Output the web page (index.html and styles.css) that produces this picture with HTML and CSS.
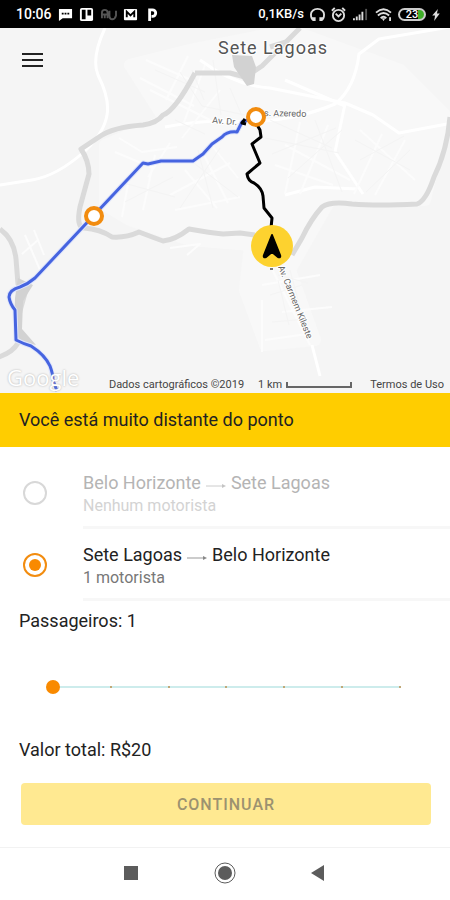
FILE: index.html
```html
<!DOCTYPE html>
<html lang="pt-BR">
<head>
    <meta charset="UTF-8">
    <meta name="viewport" content="width=device-width, initial-scale=1.0">
    <title>Sete Lagoas - Belo Horizonte</title>
    <link rel="stylesheet" href="styles.css">
</head>
<body>

<header class="status-bar">
    <div class="status-group">
        <span class="clock">10:06</span>
        <svg class="status-icon" viewBox="0 0 16 16">
            <path fill="#fff" d="M1 2h14v10H5l-4 3z"/>
            <path fill="#000" d="M4 6h2v2H4zM7 6h2v2H7zM10 6h2v2h-2z"/>
        </svg>
        <svg class="status-icon" viewBox="0 0 16 16">
            <rect x="1" y="1" width="14" height="14" rx="2" fill="#fff"/>
            <path fill="#000" d="M3 3h4v10H3zM9 3h4v6H9z"/>
        </svg>
        <svg class="status-icon wide" viewBox="0 0 18 16" fill="none" stroke="#555" stroke-width="2">
            <path d="M2 12V6q0-3 3-3t3 3v6M2 8h6M10 4v5q0 4 3 4t4-4V4M5 8v4"/>
        </svg>
        <svg class="status-icon" viewBox="0 0 16 16">
            <rect x="1" y="2" width="14" height="12" rx="1" fill="#fff"/>
            <path fill="none" stroke="#000" stroke-width="2" d="M4 11V5l4 4 4-4v6"/>
        </svg>
        <svg class="status-icon" viewBox="0 0 16 16">
            <path fill="none" stroke="#fff" stroke-width="3" d="M6 15V3h3a3 3 0 0 1 0 7H8"/>
        </svg>
    </div>
    <div class="status-group status-right">
        <span class="speed">0,1KB/s</span>
        <svg class="status-icon" viewBox="0 0 16 16">
            <path fill="none" stroke="#ddd" stroke-width="2" d="M4 14C1 13 1 10 1 8a7 6 0 0 1 14 0c0 2 0 5-3 6"/>
            <path fill="#ddd" d="M2 11h4v4H3zM10 11h4l-1 4h-3z"/>
        </svg>
        <svg class="status-icon" viewBox="0 0 16 16" fill="none" stroke="#ddd" stroke-width="2">
            <circle cx="8" cy="9" r="6"/>
            <path d="M1 4l3-3M15 4l-3-3M5 7l3 3 3-3"/>
        </svg>
        <svg class="status-icon wide" viewBox="0 0 18 16">
            <path fill="#ddd" d="M1 12h2v2H1zM4 10h2v4H4zM7 8h2v6H7zM10 5h2v9h-2z"/>
            <path fill="#555" d="M14 2h2v12h-2z"/>
        </svg>
        <svg class="status-icon wide" viewBox="0 0 18 16" fill="none" stroke="#ddd" stroke-width="2">
            <path d="M1 6q8-7 16 0M3 9q6-5 12 0M6 12q3-3 6 0"/>
            <path fill="#ddd" stroke="none" d="M7 12h4l-2 3zM15 11h2v4h-2z"/>
        </svg>
        <span class="battery">23</span>
        <svg class="status-icon bolt" viewBox="0 0 8 16">
            <path fill="#ddd" d="M6 2L0 9h3l-1 6 6-8H5z"/>
        </svg>
    </div>
</header>

<main class="map">
    <svg class="map-canvas" viewBox="0 28 450 365" preserveAspectRatio="xMidYMid slice">
        <rect y="28" width="450" height="365" fill="#f5f5f5"/>

        <!-- built-up area -->
        <path class="town" d="M130 65L190 50 290 30 400 70 445 115 425 200 330 200 290 270 315 340 265 345 245 290 250 245 190 240 130 220 105 205 105 145 165 120z"/>

        <!-- local streets -->
        <g class="streets">
            <path d="M105 28q-14 30-7 47 12 24 9 40-3 18-22 36-28 25-53 29L0 185"/>
            <path d="M165 127q30-6 60-6 60 4 110-17 20-16 24-50l20-15 71-12"/>
            <path d="M200 60q35 26 70 28l75 15 28 12 26 18 48-9"/>
            <path d="M285 80l60 26M345 104l-10 48 28 42M285 195l30-8 42 2"/>
            <path d="M312 345l8 31"/>
        </g>
        <g class="lanes">
            <path d="M270 265l40 80M282 312l50-5M262 285l58-10M265 340l42-6M262 300v52"/>
            <path d="M119 138l23 14 35-5M115 152l38 16M130 173l-8 44M155 155l-12 55M170 143l-22 34"/>
            <path d="M150 90l60 30M188 56l-22 44M205 65l-22 60M146 60l45 20M140 78l54 28M220 90l-38 48"/>
            <path d="M185 170l32 38M202 151l26 52M170 195l60-32M175 210l65-13M210 143l28 35"/>
            <path d="M285 145l65 35M275 165l58 20M300 122l-15 72M328 125l-28 69M360 130l55 50M382 134l-28 60M405 140l-30 55"/>
            <path d="M25 235l15 35M34 230l10 25M170 248l30-4-13 11M38 240l-16 14"/>
        </g>
        <g class="blocks">
            <path d="M180 72l22 34 43 9M192 70l12 30M213 60l8 55M230 88l12 28M155 70l50 22M175 120l30 14"/>
            <path d="M120 182l55 15M125 202l48-25M190 160l48 37M198 150l15 58M220 148l-40 60"/>
            <path d="M270 120l62 28M265 138l74 15M272 154l64-26M288 178l54-48M315 120l27 72M355 140l55 30M360 160l44-24M410 150l-44 42"/>
            <path d="M278 275l30 8M270 295l32-10M272 322l35-3M290 270l12 45M278 280l11 45"/>
        </g>

        <!-- highways -->
        <g class="highways">
            <path d="M450 117q-3 34-16 60-8 24-17 27-40 2-65 0-22-3-30 3-11 12-20 31l-10 17"/>
            <path d="M195 73q-20 38-32 42-6 8-20 10-30 2-44 12l-18 12q8 12 8 25l-9 33q-4 20 4 21 16 1 28 9 14 1 27-5 13 5 24 9 12-1 26-12 22 4 34 5l17-1 15 2"/>
            <path d="M0 229q14 10 16 30l2 25 7 9-7 25v25q-5 9-19 14"/>
            <path d="M195 73h35l15 4 17-11 38-38M270 47l16-5"/>
        </g>
        <path class="junction" d="M232 55l20 1 4 11-2 17-7 2-13-19zM18 278l15 7-10 16-1 28 14 16-13-3-9-10 1-34z"/>

        <!-- street names -->
        <text class="street-name" transform="translate(212 123) rotate(5)">Av. Dr.</text>
        <text class="street-name" transform="translate(264 116) rotate(1)">s. Azeredo</text>
        <text class="street-name" transform="translate(278 267) rotate(68)">Av. Carmem Kileste</text>
        <text class="city" x="273" y="54" text-anchor="middle">Sete Lagoas</text>

        <!-- routes -->
        <path class="route-halo" d="M248 120l-6 2-5 10q-10-1-15 5l-10 7-9 10-10 7-32 0-13 3-5-1L35 278q-7 6-15 9-11 3-11 10 1 7 6 13l1 30q8 4 15 6 14 9 19 20l3 12"/>
        <path class="route" d="M248 120l-6 2-5 10q-10-1-15 5l-10 7-9 10-10 7-32 0-13 3-5-1L35 278q-7 6-15 9-11 3-11 10 1 7 6 13l1 30q8 4 15 6 14 9 19 20 3 8 3 14l4 11"/>
        <path class="walk" d="M256 123l4 7 1 7-9 7 8 19-13 11q1 7 7 9 8 5 9 13l1 12 8 10-1 10M245 119l-3 4 4 1"/>
        <path class="walk-end" d="M270 269h3"/>

        <!-- pins -->
        <g class="stop">
            <circle cx="256" cy="117" r="8"/>
            <circle cx="94" cy="216" r="8"/>
        </g>
        <circle cx="272" cy="246" r="21" fill="#fdd22f"/>
        <path d="M272 235l8 20q1 3-2 2l-6-5-6 5q-3 1-2-2z" fill="#000" stroke="#000" stroke-width="2" stroke-linejoin="round"/>
    </svg>
    <button class="menu" type="button" aria-label="Menu">
        <span></span><span></span><span></span>
    </button>
    <footer class="map-footer">
        <span class="google">Google</span>
        <span class="copyright">Dados cartográficos ©2019</span>
        <span class="scale">1 km <i class="scale-bar"></i></span>
        <a href="#termos">Termos de Uso</a>
    </footer>
</main>

<p class="banner">Você está muito distante do ponto</p>

<form class="trip">
    <div class="option disabled">
        <input type="radio" name="rota" id="ida" disabled>
        <label for="ida">
            <span class="route-title">Belo Horizonte
                <svg class="arrow" viewBox="0 0 20 6"><path d="M0 3h18"/><path class="arrow-head" d="M16 1l4 2-4 2z"/></svg>
                Sete Lagoas</span>
            <span class="drivers">Nenhum motorista</span>
        </label>
    </div>
    <div class="option">
        <input type="radio" name="rota" id="volta" checked>
        <label for="volta">
            <span class="route-title">Sete Lagoas
                <svg class="arrow" viewBox="0 0 20 6"><path d="M0 3h18"/><path class="arrow-head" d="M16 1l4 2-4 2z"/></svg>
                Belo Horizonte</span>
            <span class="drivers">1 motorista</span>
        </label>
    </div>

    <label class="field-label" for="passageiros">Passageiros: <output id="total">1</output></label>
    <div class="slider">
        <div class="ticks"><i></i><i></i><i></i><i></i><i></i><i></i><i></i></div>
        <input type="range" id="passageiros" min="1" max="7" value="1">
    </div>

    <p class="price">Valor total: R$20</p>
    <button class="continue" type="button" disabled>CONTINUAR</button>
</form>

<nav class="nav-bar">
    <button type="button" aria-label="Recentes"><svg viewBox="0 0 24 24"><path fill="#5c5c5c" d="M5 5h14v14H5z"/></svg></button>
    <button type="button" aria-label="Início"><svg viewBox="0 0 24 24"><circle cx="12" cy="12" r="10" fill="none" stroke="#5c5c5c" stroke-width="1"/><circle cx="12" cy="12" r="7" fill="#5c5c5c"/></svg></button>
    <button type="button" aria-label="Voltar"><svg viewBox="0 0 24 24"><path fill="#5c5c5c" d="M17 4v16L4 12z"/></svg></button>
</nav>

<script>
    const slider = document.getElementById('passageiros');
    slider.addEventListener('input', () => {
        document.getElementById('total').innerText = slider.value;
    });
</script>

</body>
</html>
```
FILE: styles.css
```css
* {
    box-sizing: border-box;
}
body {
    margin: 0;
    min-height: 100vh;
    display: flex;
    flex-direction: column;
    font-family: Roboto, sans-serif;
    font-size: 18px;
    line-height: 24px;
    color: #222;
    background-color: #fff;
}
p {
    margin: 0;
}
button {
    border: none;
    background: none;
    padding: 0;
    font-family: inherit;
}

/* status bar */
.status-bar {
    display: flex;
    justify-content: space-between;
    align-items: center;
    height: 28px;
    padding: 0 10px 0 16px;
    background-color: #000;
    color: #fff;
    font-size: 14px;
    font-weight: 500;
}
.status-group {
    display: flex;
    align-items: center;
    gap: 6px;
}
.status-icon {
    width: 15px;
    height: 15px;
}
.status-icon.wide {
    width: 17px;
}
.status-icon.bolt {
    width: 8px;
}
.speed {
    font-size: 13px;
}
.battery {
    width: 28px;
    height: 13px;
    border: 2px solid #ccc;
    border-radius: 7px;
    background: linear-gradient(to right, #000 75%, #3fae29 75%);
    font-size: 11px;
    line-height: 9px;
    text-align: center;
}

/* map */
.map {
    position: relative;
    flex: 1;
    min-height: 365px;
    display: flex;
    flex-direction: column;
    justify-content: space-between;
    overflow: hidden;
}
.map-canvas {
    position: absolute;
    width: 100%;
    height: 100%;
}
.town {
    fill: #f8f8f8;
    stroke: #f8f8f8;
    stroke-width: 12;
    stroke-linejoin: round;
}
.streets, .lanes {
    fill: none;
    stroke: #fff;
    stroke-width: 3;
    stroke-linejoin: round;
}
.lanes {
    stroke: #fcfcfc;
    stroke-width: 2;
}
.blocks {
    fill: none;
    stroke: #f4f4f4;
    stroke-width: 1;
}
.highways {
    fill: none;
    stroke: #dadada;
    stroke-width: 5;
    stroke-linejoin: round;
}
.junction {
    fill: #d2d2d2;
}
.street-name {
    font-size: 9px;
    fill: #666;
    stroke: #fff;
    stroke-width: 2;
    paint-order: stroke;
}
.city {
    font-size: 18px;
    letter-spacing: 1px;
    fill: #555;
    stroke: #fff;
    stroke-width: 2;
    paint-order: stroke;
}
.route-halo, .route, .walk, .walk-end {
    fill: none;
    stroke-linejoin: round;
}
.route-halo {
    stroke: #dfe5fb;
    stroke-width: 5;
}
.route {
    stroke: #4664e0;
    stroke-width: 3;
}
.walk {
    stroke: #000;
    stroke-width: 3;
}
.walk-end {
    stroke: #777;
    stroke-width: 2;
}
.stop {
    fill: #fff;
    stroke: #f28c0f;
    stroke-width: 4;
}
.menu {
    position: relative;
    display: flex;
    flex-direction: column;
    gap: 4px;
    width: 21px;
    margin: 25px 0 0 22px;
}
.menu span {
    height: 2px;
    background-color: #222;
}
.map-footer {
    position: relative;
    display: flex;
    align-items: flex-end;
    padding: 0 6px 2px 7px;
    font-size: 11px;
    line-height: 13px;
    color: #444;
}
.map-footer a {
    color: inherit;
    text-decoration: none;
}
.google {
    font-family: "Open Sans", sans-serif;
    font-size: 22px;
    line-height: 28px;
    color: #fff;
    text-shadow: 0 0 2px #aaa;
}
.copyright {
    margin-left: auto;
}
.scale {
    display: flex;
    align-items: center;
    gap: 4px;
    margin: 0 18px 0 14px;
}
.scale-bar {
    width: 66px;
    height: 6px;
    border: 2px solid #666;
    border-top: none;
}

/* trip form */
.banner {
    padding: 15px 19px;
    background-color: #ffcd00;
}
.trip {
    padding-top: 10px;
}
.option {
    display: flex;
    align-items: center;
    padding-left: 23px;
}
.option input {
    appearance: none;
    display: grid;
    place-items: center;
    width: 24px;
    height: 24px;
    margin: 0;
    border: 2px solid #f28c0f;
    border-radius: 50%;
}
.option input:checked::before {
    content: "";
    width: 12px;
    height: 12px;
    border-radius: 50%;
    background-color: #f98a00;
}
.option label {
    flex: 1;
    margin-left: 36px;
    padding: 14px 0 10px;
    border-bottom: 3px solid #f7f7f7;
}
.route-title {
    display: flex;
    align-items: center;
    gap: 5px;
}
.arrow {
    width: 20px;
    height: 6px;
    margin-top: 6px;
    fill: none;
    stroke: #999;
    stroke-width: 1;
}
.arrow-head {
    fill: #888;
    stroke: none;
}
.drivers {
    display: block;
    font-size: 16px;
    line-height: 21px;
    color: #777;
}
.option.disabled input {
    border-color: #d8d8d8;
}
.option.disabled .route-title {
    color: #b4b4b4;
}
.option.disabled .drivers {
    color: #d3d3d3;
}
.option.disabled .arrow {
    stroke: #ccc;
}
.option.disabled .arrow-head {
    fill: #c4c4c4;
}
.field-label {
    display: block;
    padding: 8px 19px 0;
}
.slider {
    display: grid;
    align-items: center;
    margin: 41px 43px 38px 46px;
}
.slider input, .ticks {
    grid-area: 1 / 1;
}
.slider input {
    appearance: none;
    width: 100%;
    height: 26px;
    margin: 0;
    background: none;
}
.slider input::-webkit-slider-thumb {
    appearance: none;
    width: 14px;
    height: 14px;
    border-radius: 50%;
    background-color: #f98a00;
}
.ticks {
    display: flex;
    justify-content: space-between;
    height: 2px;
    margin: 0 6px;
    background-color: #cdecec;
}
.ticks i {
    width: 2px;
    background-color: #c0a878;
}
.price {
    padding: 0 19px;
}
.continue {
    display: block;
    width: calc(100% - 40px);
    height: 42px;
    margin: 21px 19px 22px 21px;
    border-radius: 4px;
    background-color: #ffe991;
    color: #9c9270;
    font-size: 16px;
    font-weight: 500;
    letter-spacing: 1px;
}

/* navigation buttons */
.nav-bar {
    display: flex;
    justify-content: center;
    gap: 70px;
    padding: 13px 0 17px;
    border-top: 1px solid #f2f2f2;
}
.nav-bar svg {
    display: block;
    width: 24px;
    height: 24px;
}
```
